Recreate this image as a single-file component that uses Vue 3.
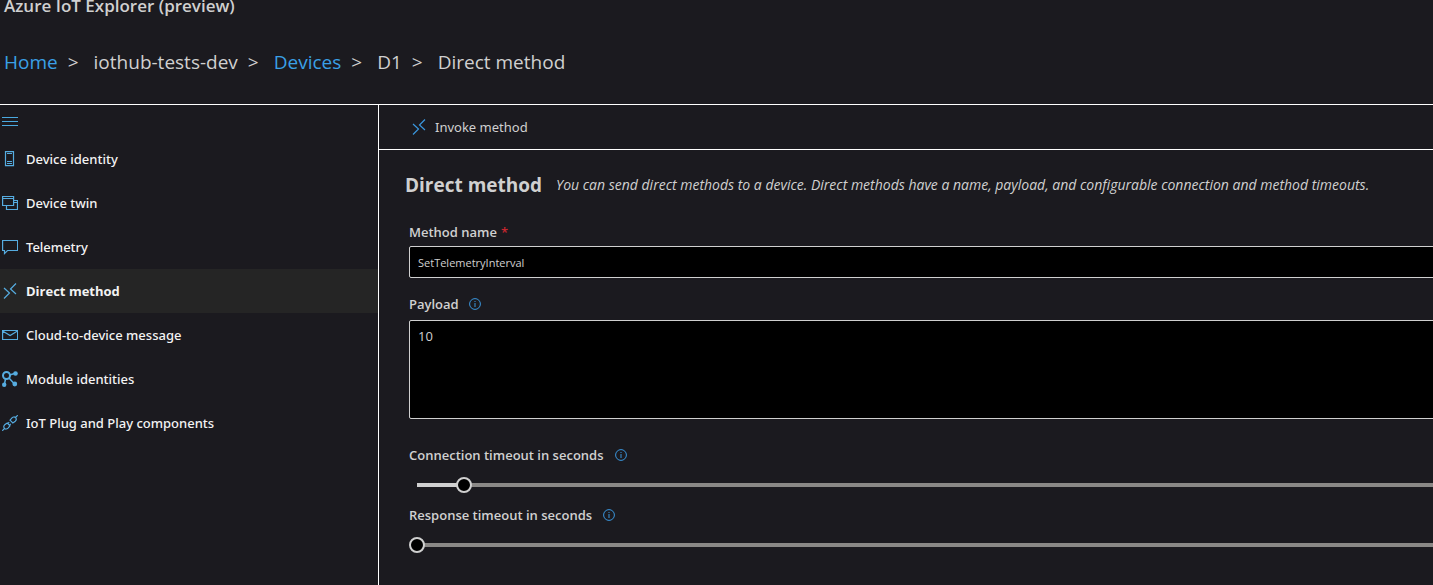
<script setup>
import { ref } from 'vue'

const crumbs = [
  { text: 'Home', link: true },
  { text: 'iothub-tests-dev' },
  { text: 'Devices', link: true },
  { text: 'D1' },
  { text: 'Direct method' },
]

const navItems = [
  { icon: 'identity', text: 'Device identity' },
  { icon: 'twin', text: 'Device twin' },
  { icon: 'telemetry', text: 'Telemetry' },
  { icon: 'method', text: 'Direct method', active: true },
  { icon: 'mail', text: 'Cloud-to-device message' },
  { icon: 'module', text: 'Module identities' },
  { icon: 'plug', text: 'IoT Plug and Play components' },
]

const methodName = ref('SetTelemetryInterval')
const payload = ref('10')
const maxTimeout = 218
const sliders = ref([
  { id: 'connection', label: 'Connection timeout in seconds', value: 10 },
  { id: 'response', label: 'Response timeout in seconds', value: 0 },
])
</script>

<template>
  <div class="app">
    <header class="top">
      <div class="title">Azure IoT Explorer (preview)</div>
      <nav class="crumbs" aria-label="Breadcrumb">
        <template v-for="(c, i) in crumbs" :key="c.text">
          <a v-if="c.link" href="#">{{ c.text }}</a>
          <span v-else>{{ c.text }}</span>
          <span v-if="i < crumbs.length - 1" class="sep">&gt;</span>
        </template>
      </nav>
    </header>

    <div class="body">
      <nav class="side" aria-label="Device">
        <button class="burger" aria-label="Collapse navigation">
          <svg width="16" height="10" viewBox="0 0 16 10" stroke="currentColor"><path d="M0 1.5h16M0 5.5h16M0 9.5h16" /></svg>
        </button>
        <a v-for="n in navItems" :key="n.text" href="#" class="item" :class="{ active: n.active }">
          <svg class="icon" width="16" height="16" viewBox="0 0 16 16" fill="none" stroke="currentColor" stroke-width="1.2">
            <path v-if="n.icon === 'identity'" d="M3.5.6h8v14h-8zM5 2.500h5M5 10.500h5M5 12.500h5" />
            <path v-else-if="n.icon === 'twin'" d="M.6 1.500h11v9H.6zM.6 3.500h11M11.500 5.500h4v9h-11v-4M11.500 7.500h4" />
            <path v-else-if="n.icon === 'telemetry'" d="M.6 1.500h15v10H5.500l-3 3v-3H.6z" />
            <path v-else-if="n.icon === 'method'" d="M14 .5L8.500 6l5.500 5M2 5l5.500 5L2 15.500" />
            <path v-else-if="n.icon === 'mail'" d="M.6 3.500h15v9H.6zM.6 4l7.500 4.500L15.500 4" />
            <template v-else-if="n.icon === 'module'">
              <circle cx="4.500" cy="4.500" r="3.500" stroke-width="2" />
              <path d="M7.500 4l5-1.500M3.500 8L2.500 13M7 7l5.500 6" stroke-width="1.500" />
              <g fill="currentColor" stroke="none"><circle cx="13.500" cy="2.500" r="2.300" /><circle cx="2.200" cy="13.800" r="2.200" /><circle cx="12.800" cy="13" r="2.400" /></g>
            </template>
            <path v-else d="M8 5.200l2.800 2.800 2.500-1.800c1.200-1.200 1.200-2.500.2-3.500s-2.300-1-3.500.2zM13.500 2.500L15.800.2M8 10.800L5.200 8 2.700 9.800c-1.200 1.200-1.200 2.500-.2 3.500s2.300 1 3.500-.2zM2.500 13.500L.2 15.800M5.800 8.600L7.200 7.200M7.400 10.200l1.400-1.400" />
          </svg>
          <span>{{ n.text }}</span>
        </a>
      </nav>

      <main class="main">
        <div class="commands">
          <button class="command">
            <svg width="16" height="16" viewBox="0 0 16 16" fill="none" stroke="currentColor" stroke-width="1.2"><path d="M14 .5L8.500 6l5.500 5M2 5l5.500 5L2 15.500" /></svg>
            <span>Invoke method</span>
          </button>
        </div>

        <div class="heading">
          <h1>Direct method</h1>
          <p>You can send direct methods to a device. Direct methods have a name, payload, and configurable connection and method timeouts.</p>
        </div>

        <form class="form" @submit.prevent>
          <div class="label"><label for="method">Method name</label><span class="required">*</span></div>
          <input id="method" v-model="methodName" class="text" type="text" required />

          <div class="label payload">
            <label for="payload">Payload</label>
            <svg class="info" width="12" height="12" viewBox="0 0 12 12" fill="none" stroke="currentColor"><circle cx="6" cy="6" r="5.400" /><path d="M6 5v4M6 3v1" /></svg>
          </div>
          <textarea id="payload" v-model="payload" class="area"></textarea>

          <div v-for="s in sliders" :key="s.id" class="slider">
            <div class="label">
              <label :for="s.id">{{ s.label }}</label>
              <svg class="info" width="12" height="12" viewBox="0 0 12 12" fill="none" stroke="currentColor"><circle cx="6" cy="6" r="5.400" /><path d="M6 5v4M6 3v1" /></svg>
            </div>
            <input
              :id="s.id"
              v-model.number="s.value"
              type="range"
              min="0"
              :max="maxTimeout"
              :style="{ '--fill': (s.value / maxTimeout) * 100 + '%' }"
            />
          </div>
        </form>
      </main>
    </div>
  </div>
</template>

<style>
body {
  margin: 0;
  background: #1b1a1f;
}
</style>

<style scoped>
.app {
  min-height: 100vh;
  display: flex;
  flex-direction: column;
  overflow: hidden;
  background: #1b1a1f;
  color: #d0d0d0;
  font-family: "Open Sans", "Noto Sans", sans-serif;
  font-size: 13px;
}
button,
input,
textarea {
  box-sizing: border-box;
  margin: 0;
  font: inherit;
  color: inherit;
}
.top {
  padding: 0 4px 28px;
  border-bottom: 1px solid #fff;
}
.title {
  font-size: 17px;
  font-weight: 600;
  line-height: 12px;
}
.crumbs {
  display: flex;
  margin-top: 36px;
  font-size: 19px;
  line-height: 28px;
}
.crumbs a {
  color: #3aa0e6;
  text-decoration: none;
}
.sep {
  margin: 0 15px 0 10px;
}
.body {
  flex: 1;
  display: flex;
}
.side {
  flex: 0 0 378px;
  border-right: 1px solid #fff;
  font-family: "Noto Sans", "Open Sans", sans-serif;
}
.burger {
  display: flex;
  align-items: center;
  height: 32px;
  padding: 0 2px;
  border: 0;
  background: none;
  color: #4aa9e0;
}
.item {
  display: flex;
  align-items: center;
  gap: 8px;
  height: 44px;
  padding: 0 2px;
  color: #f3f3f3;
  font-weight: 500;
  text-decoration: none;
}
.item.active {
  background: #252525;
  font-family: "Open Sans", "Noto Sans", sans-serif;
  font-weight: 700;
}
.icon {
  flex: none;
  color: #56ace0;
}
.main {
  flex: 1;
  min-width: 0;
}
.commands {
  display: flex;
  height: 44px;
  padding: 0 32px;
  border-bottom: 1px solid #fff;
}
.command {
  display: flex;
  align-items: center;
  gap: 8px;
  padding: 0;
  border: 0;
  background: none;
  font-family: "Noto Sans", "Open Sans", sans-serif;
}
.command svg {
  color: #3a96dd;
}
.heading {
  display: flex;
  align-items: center;
  gap: 14px;
  padding: 20px 26px 0;
  line-height: 30px;
  white-space: nowrap;
}
h1 {
  margin: 0;
  font-size: 19px;
  font-weight: 700;
}
p {
  margin: 0;
  font-size: 14px;
  font-style: italic;
}
.form {
  margin: 22px -16px 0 30px;
}
.label {
  display: flex;
  align-items: center;
  gap: 10px;
  height: 20px;
  margin-bottom: 4px;
  font-weight: 600;
}
.required {
  margin-left: -6px;
  color: #c4262e;
}
.info {
  color: #3a96dd;
}
.text {
  display: block;
  width: 100%;
  height: 32px;
  padding: 0 8px;
  border: 1px solid #d0d0d0;
  border-radius: 2px;
  background: #000;
  font-size: 11px;
}
.payload {
  margin: 16px 0 6px;
}
.area {
  display: block;
  width: 100%;
  height: 99px;
  padding: 6px 8px;
  border: 1px solid #d0d0d0;
  border-radius: 2px;
  background: #000;
  line-height: 18px;
  resize: none;
}
.slider {
  height: 60px;
}
.slider .label {
  gap: 11px;
}
.area + .slider {
  margin-top: 26px;
}
input[type="range"] {
  appearance: none;
  display: block;
  width: 100%;
  height: 32px;
  background: linear-gradient(to right, #d0d0d0 var(--fill), #8a8886 var(--fill)) 8px center / calc(100% - 16px) 4px no-repeat;
}
input[type="range"]::-webkit-slider-thumb {
  appearance: none;
  box-sizing: border-box;
  width: 16px;
  height: 16px;
  border: 2px solid #d0d0d0;
  border-radius: 50%;
  background: #000;
}
</style>
